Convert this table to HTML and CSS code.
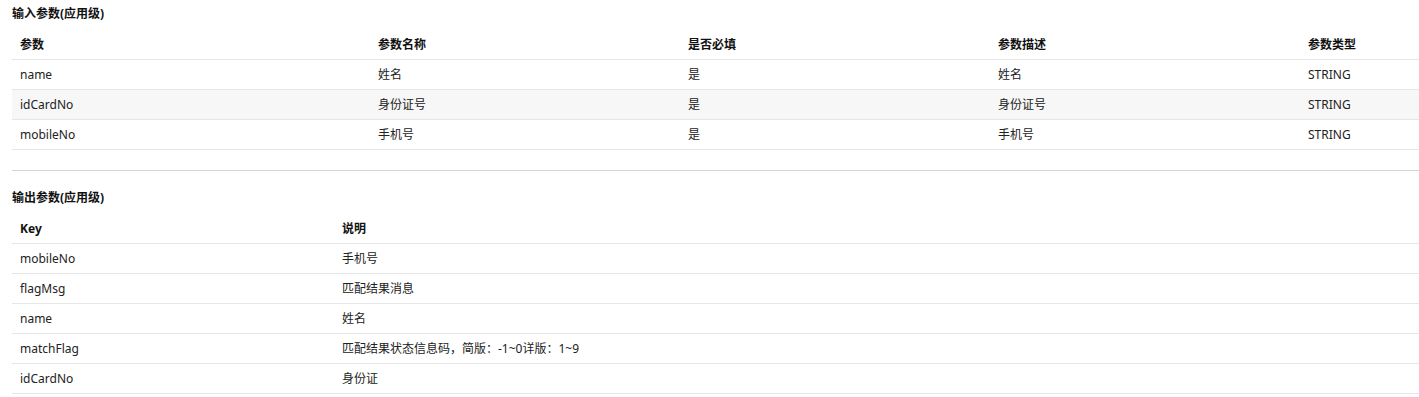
FILE: index.html
```html
<!DOCTYPE html>
<html lang="zh">
<head>
<meta charset="utf-8">
<title>参数</title>
<link rel="stylesheet" href="styles.css">
</head>
<body>
<section class="block">
  <h4 class="title">输入参数(应用级)</h4>
  <table class="grid">
    <colgroup>
      <col class="c1"><col class="c2"><col class="c3"><col class="c4"><col class="c5">
    </colgroup>
    <thead>
      <tr><th>参数</th><th>参数名称</th><th>是否必填</th><th>参数描述</th><th>参数类型</th></tr>
    </thead>
    <tbody>
      <tr><td>name</td><td>姓名</td><td>是</td><td>姓名</td><td>STRING</td></tr>
      <tr class="alt"><td>idCardNo</td><td>身份证号</td><td>是</td><td>身份证号</td><td>STRING</td></tr>
      <tr><td>mobileNo</td><td>手机号</td><td>是</td><td>手机号</td><td>STRING</td></tr>
    </tbody>
  </table>
</section>
<hr class="sep">
<section class="block block2">
  <h4 class="title">输出参数(应用级)</h4>
  <table class="grid">
    <colgroup>
      <col class="k1"><col class="k2">
    </colgroup>
    <thead>
      <tr><th>Key</th><th>说明</th></tr>
    </thead>
    <tbody>
      <tr><td>mobileNo</td><td>手机号</td></tr>
      <tr><td>flagMsg</td><td>匹配结果消息</td></tr>
      <tr><td>name</td><td>姓名</td></tr>
      <tr><td>matchFlag</td><td>匹配结果状态信息码，简版：-1~0详版：1~9</td></tr>
      <tr><td>idCardNo</td><td>身份证</td></tr>
    </tbody>
  </table>
</section>
</body>
</html>
```
FILE: styles.css
```css
html, body {
  margin: 0;
  padding: 0;
  background: #fff;
}
body {
  padding: 4px 0 0 12px;
  font-family: "Noto Sans", "Noto Sans CJK SC", sans-serif;
  font-size: 12px;
  color: #222;
}
.title {
  margin: 0;
  font-size: 12px;
  line-height: 20px;
  font-weight: bold;
  color: #111;
}
.grid {
  margin-top: 6px;
  width: 1407px;
  border-collapse: collapse;
  table-layout: fixed;
}
.grid th, .grid td {
  height: 29px;
  padding: 0 8px;
  text-align: left;
  border-bottom: 1px solid #e6e6e6;
  line-height: 16px;
  white-space: nowrap;
}
.grid th {
  font-weight: bold;
  color: #111;
}
.grid tr.alt td {
  background: #f7f7f7;
}
.c1 { width: 358px; }
.c2 { width: 310px; }
.c3 { width: 310px; }
.c4 { width: 310px; }
.c5 { width: 119px; }
.k1 { width: 322px; }
.k2 { width: 1085px; }
.sep {
  margin: 20px 0 0 0;
  border: 0;
  border-top: 1px solid #d6d6d6;
  height: 0;
}
.block2 {
  padding-top: 17px;
}
.block2 .grid {
  margin-top: 6px;
}
```
